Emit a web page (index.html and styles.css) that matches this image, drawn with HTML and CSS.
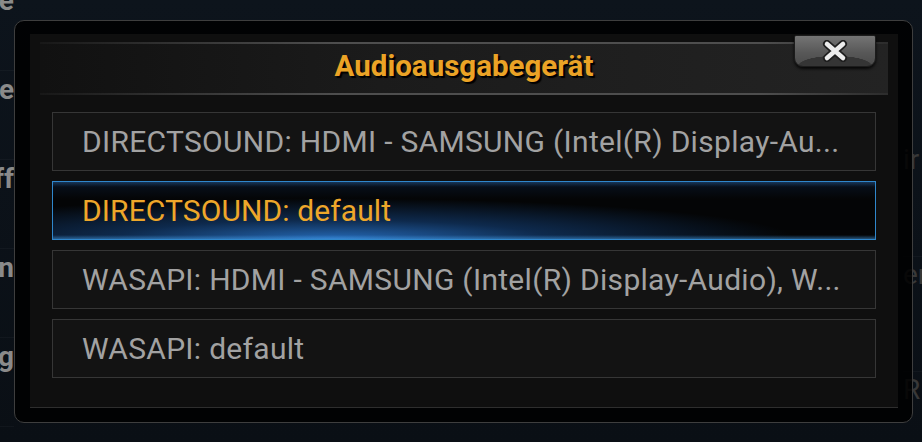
FILE: index.html
```html
<!DOCTYPE html>
<html lang="de">
<head>
    <meta charset="UTF-8">
    <meta name="viewport" content="width=device-width, initial-scale=1.0">
    <title>Audioausgabegerät</title>
    <link rel="stylesheet" href="styles.css">
</head>
<body>
    <!-- settings screen behind the dialog, only the edges show -->
    <div class="side-menu left-menu">
        <div class="side-track">
            <div class="side-item">Oberfläche</div>
            <div class="side-item">Wiedergabe</div>
            <div class="side-item">Zugriff</div>
            <div class="side-item">Einstellungen</div>
            <div class="side-item">Ausgabe-Einstellung</div>
        </div>
    </div>
    <div class="side-menu right-menu">
        <div class="side-track">
            <div class="side-item">ir</div>
            <div class="side-item">er</div>
            <div class="side-item">R</div>
        </div>
    </div>

    <div class="dialog">
        <div class="panel">
            <div class="dialog-header">
                <h1 class="dialog-title">Audioausgabegerät</h1>
            </div>
            <button class="close-button" aria-label="Schließen">
                <svg width="26" height="22" viewBox="-13 -11 26 22">
                    <path d="M-8 -7 L8 7 M8 -7 L-8 7" stroke="#1e1e1e" stroke-width="8" stroke-linecap="round" fill="none"/>
                    <path d="M-8 -7 L8 7 M8 -7 L-8 7" stroke="#ececec" stroke-width="4.6" stroke-linecap="round" fill="none"/>
                </svg>
            </button>
            <ul class="device-list">
                <li class="device">DIRECTSOUND: HDMI - SAMSUNG (Intel(R) Display-Au...</li>
                <li class="device selected">DIRECTSOUND: default</li>
                <li class="device">WASAPI: HDMI - SAMSUNG (Intel(R) Display-Audio), W...</li>
                <li class="device">WASAPI: default</li>
            </ul>
        </div>
    </div>
</body>
</html>
```

FILE: styles.css
```css
html, body {
    margin: 0;
    height: 442px;
}

body {
    box-sizing: border-box;
    padding: 20px 10px 0 14px;
    position: relative;
    overflow: hidden;
    background: linear-gradient(to bottom, #0d141c, #0a0f15);
    font-family: Roboto, "Liberation Sans", sans-serif;
}

/* background menu, clipped to the strips beside the dialog */
.side-menu {
    position: absolute;
    top: 0;
    height: 442px;
    overflow: hidden;
}

.left-menu {
    left: 0;
    width: 14px;
}

.left-menu .side-track {
    width: 300px;
    margin-left: -286px;
    margin-top: -18px;
    text-align: right;
    color: #8a8a8a;
    font-weight: bold;
    font-size: 28px;
}

.right-menu {
    left: 903px;
    width: 19px;
}

.right-menu .side-track {
    margin-top: 142px;
    color: #383838;
    font-size: 28px;
}

.side-item {
    height: 88px;
    line-height: 38px;
    border-bottom: 1px solid rgba(255, 255, 255, 0.03);
}

.right-menu .side-item {
    height: 114px;
    line-height: 36px;
}

.dialog {
    box-sizing: border-box;
    width: 899px;
    height: 403px;
    border: 1px solid #3e3e3e;
    border-radius: 10px;
    padding: 13px 14px 14px 15px;
    background: rgba(0, 0, 0, 0.86);
    position: relative;
    z-index: 1;
}

.panel {
    box-sizing: border-box;
    height: 100%;
    padding: 8px 22px 0;
    background: #0f0f0f;
    border-bottom: 1px solid #2e2e2e;
    position: relative;
}

.dialog-header {
    box-sizing: border-box;
    height: 53px;
    margin: 0 -12px;
    border-top: 2px solid transparent;
    border-bottom: 2px solid transparent;
    border-image: linear-gradient(to right, rgba(80, 80, 80, 0.1), #4e4e4e 35%, #4e4e4e 85%, rgba(80, 80, 80, 0.2)) 1;
    background: linear-gradient(to right, #111 0%, #1b1b1b 40%, #232323 100%);
    display: flex;
    justify-content: center;
    align-items: center;
    padding-bottom: 6px;
}

.dialog-title {
    margin: 0;
    font-size: 29.5px;
    font-weight: bold;
    color: #eba326;
    text-shadow: 2px 2px 1px #000;
}

.close-button {
    position: absolute;
    top: 1px;
    right: 22px;
    width: 82px;
    height: 32px;
    padding: 0;
    border: 1px solid #1c1c1c;
    border-radius: 2px 2px 9px 9px;
    background:
        radial-gradient(ellipse 75% 55% at 50% 100%, #353535 60%, transparent 62%),
        linear-gradient(to bottom, #747474, #585858 55%, #4a4a4a);
    box-shadow: 0 2px 3px rgba(0, 0, 0, 0.8);
    display: flex;
    justify-content: center;
    align-items: center;
}

.device-list {
    list-style: none;
    margin: 17px 0 0;
    padding: 0;
    display: flex;
    flex-direction: column;
    gap: 10px;
}

.device {
    box-sizing: border-box;
    height: 59px;
    padding: 0 0 1px 29px;
    border: 1px solid #363636;
    background: #131313;
    color: #a2a2a2;
    font-size: 30px;
    letter-spacing: 0.3px;
    display: flex;
    align-items: center;
    white-space: nowrap;
    overflow: hidden;
}

.device.selected {
    border-color: #2f87cc;
    color: #eea72a;
    letter-spacing: 0.1px;
    background:
        linear-gradient(to top, rgba(70, 160, 235, 0.5), transparent 4px),
        linear-gradient(to bottom, rgba(50, 120, 190, 0.35), transparent 5px),
        radial-gradient(ellipse 75% 95% at 34% 100%, rgba(40, 115, 200, 0.9), rgba(22, 72, 135, 0.55) 35%, transparent 75%),
        linear-gradient(to bottom, #081220, #040506 30%, #040506);
}
```
